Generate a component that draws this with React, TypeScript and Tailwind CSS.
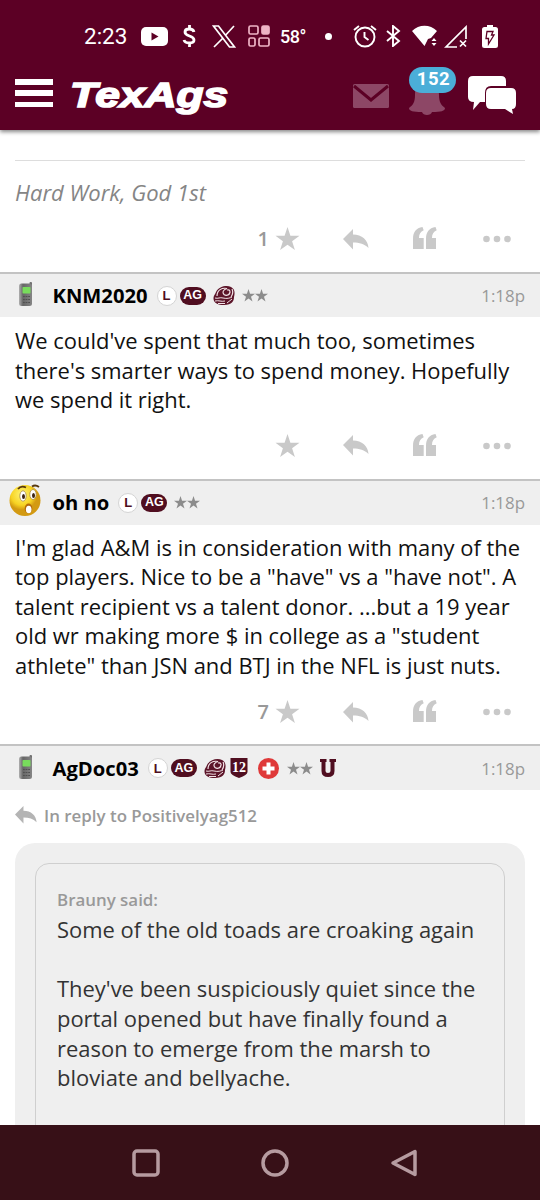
import React from 'react';

const Star = ({ className }: { className: string }) => (
  <svg viewBox="0 0 24 24" className={className} fill="currentColor"><path d="M12 0l2.900 8.800H24l-7.400 5.500L19.400 23 12 17.700 4.600 23l2.800-8.700L0 8.800h9.100z" /></svg>
);
const Reply = ({ className }: { className: string }) => (
  <svg viewBox="0 0 26 21" className={className} fill="currentColor"><path d="M10 0v5.500C19 5.500 25 11 25.500 19c-4-4-9-5.500-15.500-5.500v7L0 10z" /></svg>
);
const Quote = ({ className }: { className: string }) => (
  <svg viewBox="0 0 24 22" className={className} fill="currentColor"><path d="M0 22V12C0 5 3 1 9.500 0l1.200 3.200C7.500 4.500 6 7 6 11h4.700v11zM13 22V12c0-7 3-11 9.500-12l1.200 3.200C20.500 4.500 19 7 19 11h4v11z" /></svg>
);

function Actions({ count, className }: { count?: string; className: string }) {
  return (
    <div className={`flex h-6 items-center text-[#c9c9c9] ${className}`}>
      <span className="w-[275px] shrink-0 pr-[6px] text-right text-[20px] font-semibold leading-6 text-[#999]">{count}</span>
      <Star className="h-[24px] w-[25px] shrink-0" />
      <Reply className="ml-[43px] h-[21px] w-[26px] shrink-0" />
      <Quote className="ml-[44px] h-[22px] w-[24px] shrink-0 -translate-y-px" />
      <svg viewBox="0 0 28 8" className="ml-[46px] h-2 w-7 shrink-0" fill="currentColor"><circle cx="3.500" cy="4" r="3.300" /><circle cx="14" cy="4" r="3.300" /><circle cx="24.500" cy="4" r="3.300" /></svg>
    </div>
  );
}

const Phone = () => (
  <svg viewBox="0 0 16 25" className="ml-[18px] h-[25px] w-4 shrink-0 -translate-y-px">
    <defs><linearGradient id="phone" x1="0" x2="1"><stop stopColor="#b0b0b0" /><stop offset=".3" stopColor="#666" /><stop offset="1" stopColor="#858585" /></linearGradient></defs>
    <rect x="11.500" y="0" width="2.500" height="7" rx="1" fill="#707070" />
    <rect x="1" y="1.500" width="13" height="22.500" rx="2.500" fill="url(#phone)" />
    <rect x="4.500" y="5" width="8" height="6.500" rx=".8" fill="#78dc5c" />
    <path d="M5 14.500h7M5 17.500h7M5 20.500h7" stroke="#505050" strokeWidth="1.200" strokeDasharray="1.800 .8" />
  </svg>
);
const Worried = () => (
  <svg viewBox="0 0 34 34" className="ml-[8px] h-[34px] w-[34px] shrink-0 -translate-y-[3px]">
    <defs><radialGradient id="face" cx=".4" cy=".3"><stop stopColor="#fff575" /><stop offset=".7" stopColor="#f7d323" /><stop offset="1" stopColor="#d39a12" /></radialGradient></defs>
    <circle cx="17" cy="17.500" r="15.500" fill="url(#face)" />
    <g fill="#fff" stroke="#a98b45" strokeWidth=".8"><ellipse cx="15" cy="13" rx="3.200" ry="5.200" /><ellipse cx="25" cy="11.500" rx="3.200" ry="5" /></g>
    <ellipse cx="15.500" cy="13.500" rx="1.500" ry="2.500" fill="#3d2412" /><ellipse cx="25.500" cy="12.500" rx="1.500" ry="2.500" fill="#3d2412" />
    <path d="M10 6c2-2.500 5-3 8-1.500M24 3.500c3-2 5-1 7 .5" fill="none" stroke="#56370d" strokeWidth="1.800" />
    <ellipse cx="20.500" cy="25.500" rx="3.800" ry="5" fill="#b56b0b" /><ellipse cx="20.700" cy="26.500" rx="2.800" ry="3.800" fill="#fff" />
  </svg>
);
const L = () => <span className="flex h-5 w-5 shrink-0 items-center justify-center rounded-full border border-[#d4d4d4] bg-white text-[13px] font-bold text-[#500e20] [font-family:'Liberation_Sans',sans-serif]">L</span>;
const Ag = () => <span className="ml-[3px] flex h-[18px] w-[26px] shrink-0 items-center justify-center rounded-full bg-[#500e20] text-[12.500px] font-bold text-white [font-family:'Liberation_Sans',sans-serif]">AG</span>;
const Ring = () => (
  <svg viewBox="0 0 22 19" className="ml-[7px] h-[19px] w-[22px] shrink-0">
    <path d="M.5 13C.5 9 2 9 3 6 6 0 14-1 18 1c4 2 4 6 3 10 0 4-2 8-10 8C5 19 1 17 .5 13z" fill="#5c1529" />
    <path d="M4 10C4 4 9 1.500 14 2.500c-4 1-5 4-3 6 2 1.500 4 1 6-1M14 4c3-1 4 2 2 4M19 3c1 2 1 5-1 8" fill="none" stroke="#f3e3e7" strokeWidth="1.200" />
    <path d="M2 12c3 1 5-1 8 0 4 1 7 0 9-1M2 15c4-1 6 1 10 0M5 17.500h7M14 17l5-4" fill="none" stroke="#f3e3e7" strokeWidth="1" />
  </svg>
);
const Stars = ({ className }: { className: string }) => <span className={`flex shrink-0 text-[#8c8c8c] ${className}`}><Star className="h-[13px] w-[13px]" /><Star className="h-[13px] w-[13px]" /></span>;

function PostBar({ children, className }: { children: React.ReactNode; className: string }) {
  return <div className={`flex items-center border-t-2 border-[#c3c3c3] bg-[#efefef] ${className}`}>{children}<span className="ml-auto pr-[15px] text-[16.900px] text-[#999]">1:18p</span></div>;
}
function Name({ children }: { children: string }) {
  return <span className="mr-[9px] shrink-0 whitespace-nowrap text-[20.200px] font-bold text-black">{children}</span>;
}
function Lines({ lines, className }: { lines: string[]; className: string }) {
  return <div className={`whitespace-nowrap text-[21.940px] leading-[29.550px] ${className}`}>{lines.map((l, i) => <p key={i} className="h-[29.550px] w-fit">{l}</p>)}</div>;
}

function StatusBar() {
  return (
    <div className="flex h-[72px] shrink-0 items-center pl-[84px] text-white [font-family:Roboto,sans-serif]">
      <span className="w-[57px] pt-[2px] text-[22.500px]">2:23</span>
      <svg viewBox="0 0 27 19" className="h-[19px] w-[27px] shrink-0"><rect width="27" height="19" rx="5" fill="white" /><path d="M10.500 5.500v8l7-4z" fill="#5c0025" /></svg>
      <svg viewBox="0 0 16 22" className="ml-[13px] h-[22px] w-4 shrink-0" fill="none" stroke="white" strokeWidth="2.800"><path d="M13 7C12 3 4 3 4 7c0 5 9 3 9 8 0 4-9 4-10 0M8.500 0v4M8.500 18v4" /></svg>
      <svg viewBox="0 0 24 23" className="ml-[15px] h-[23px] w-6 shrink-0" fill="none" stroke="white" strokeWidth="1.700"><path d="M1.500 1h5l16 21h-5zM22 1L13.500 10.300M10.500 13.500L2 22" /></svg>
      <svg viewBox="0 0 22 22" className="ml-[12px] h-[22px] w-[22px] shrink-0" fill="none" stroke="#eeb4c6" strokeWidth="1.700"><rect x="1" y="1" width="9" height="8" rx="1.500" /><rect x="14" y="1" width="7" height="8" rx="1.500" fill="#eeb4c6" /><rect x="1" y="13" width="6" height="8" rx="1.500" /><rect x="11" y="13" width="10" height="8" rx="1.500" /></svg>
      <span className="ml-[10px] w-[45px] text-[18px] font-medium tracking-[-.5px]">58°</span>
      <span className="h-[7px] w-[7px] shrink-0 rounded-full bg-white" />
      <svg viewBox="0 0 24 24" className="ml-[21px] h-[24px] w-[24px] shrink-0" fill="none" stroke="white" strokeWidth="1.900"><circle cx="12" cy="13" r="9.500" /><path d="M11.500 8v5l4 3M1 6l5-4M18 2l5 4" /></svg>
      <svg viewBox="0 0 15 22" className="ml-[9px] h-[22px] w-[15px] shrink-0" fill="none" stroke="white" strokeWidth="1.900"><path d="M1 6l12 10-6 5V1l6 5L1 16" /></svg>
      <svg viewBox="0 0 26 22" className="ml-[11px] h-[22px] w-[26px] shrink-0"><path d="M0 6C7-1 18-1 25 6l-6 7-3 1-3.500 7z" fill="white" /><path d="M19.500 16l2.500-3 2.500 3zM19.500 18l2.500 3 2.500-3z" fill="white" /></svg>
      <svg viewBox="0 0 24 23" className="ml-[6px] h-[23px] w-6 shrink-0" fill="none" stroke="white" strokeWidth="1.700"><path d="M22 14V2L2 22h11M16 15.500l6 6m0-6l-6 6" /></svg>
      <svg viewBox="0 0 16 23" className="ml-[14px] h-[23px] w-4 shrink-0"><path d="M5 0h6v2h2.500Q16 2 16 4.500v16q0 2.500-2.500 2.500h-11Q0 23 0 20.500v-16Q0 2 2.500 2H5z" fill="white" /><path d="M5 6.500h6L9.500 10H12l-5.500 9v-5.500H4z" fill="none" stroke="#5c0025" strokeWidth="1.300" /></svg>
    </div>
  );
}

function Header() {
  return (
    <header className="relative z-10 h-[130px] bg-[#5c0025] shadow-[0_2px_4px_#0007]">
      <StatusBar />
      <div className="flex h-[48px] items-center pl-[15px]">
        <div className="flex h-[28px] w-[38px] shrink-0 -translate-y-[3px] flex-col justify-between"><i className="h-[5.500px] bg-white" /><i className="h-[5.500px] bg-white" /><i className="h-[5.500px] bg-white" /></div>
        <svg viewBox="0 0 165 48" className="ml-[17px] h-[48px] w-[165px] shrink-0"><text transform="translate(0 34.500) scale(1.180 1)" textLength="134" lengthAdjust="spacingAndGlyphs" fill="white" stroke="white" strokeWidth="1.700" className="text-[36px] font-bold italic [font-family:'Liberation_Sans',sans-serif]">TexAgs</text></svg>
        <svg viewBox="0 0 36 24" className="ml-[118px] h-[24px] w-[36px] shrink-0"><rect width="36" height="24" rx="1.500" fill="#8d4766" /><path d="M1 2l17 14L35 2" fill="none" stroke="#5c0025" strokeWidth="3" /></svg>
        <div className="relative ml-[20px] h-[48px] w-[36px] shrink-0">
          <svg viewBox="0 0 36 34" className="mt-[9px] h-[34px] w-[36px]" fill="#8d4766"><path d="M18 0C9 0 6 6 6 14c0 7-2 10-6 13 0 3 4 4 13 4 1 4 9 4 10 0 9 0 13-1 13-4-4-3-6-6-6-13 0-8-3-14-12-14z" /></svg>
          <span className="absolute -top-[5px] left-0 flex h-[26px] w-[47px] items-center justify-center rounded-full bg-[#4baed8] pl-[2px] text-[18.500px] font-bold tracking-[.5px] text-white [font-family:Roboto,sans-serif]">152</span>
        </div>
        <svg viewBox="0 0 48 39" className="ml-[23px] h-[39px] w-12 shrink-0 -translate-y-px" fill="white"><path d="M5 0h28q5 0 5 5v5H23q-6 0-6 7v9h-5l-7 8 1-8q-6 0-6-5V5q0-5 5-5z" /><path d="M23 12h20q5 0 5 5v11q0 5-4 5l1 5-8-5H23q-5 0-5-5V17q0-5 5-5z" /></svg>
      </div>
    </header>
  );
}

export default function App() {
  return (
    <div className="flex h-[1200px] w-[540px] flex-col overflow-hidden bg-white [font-family:'Open_Sans','Noto_Sans',sans-serif]">
      <Header />
      <main className="h-[995px] shrink-0 overflow-hidden">
        <div className="mx-[15px] mt-[30px] h-px bg-[#ddd]" />
        <p className="ml-[15px] mt-[16px] w-fit whitespace-nowrap text-[22px] italic leading-[30px] text-[#858585]">Hard Work, God 1st</p>
        <Actions count="1" className="mt-[20px]" />
        <div className="mt-[21px]"><PostBar className="h-[45px]"><Phone /><span className="w-[18.500px]" /><Name>KNM2020</Name><L /><Ag /><Ring /><Stars className="ml-[7px]" /></PostBar></div>
        <Lines className="ml-[15px] mt-[9px] text-[#111]" lines={["We could've spent that much too, sometimes", "there's smarter ways to spend money. Hopefully", 'we spend it right.']} />
        <Actions className="mt-[19px]" />
        <div className="mt-[21px]"><PostBar className="h-[46px]"><Worried /><span className="w-[10.500px]" /><Name>oh no</Name><L /><Ag /><Stars className="ml-[7px]" /></PostBar></div>
        <Lines className="ml-[15px] mt-[8px] text-[#111]" lines={["I'm glad A&M is in consideration with many of the", 'top players. Nice to be a "have" vs a "have not". A', 'talent recipient vs a talent donor. ...but a 19 year', 'old wr making more $ in college as a "student', 'athlete" than JSN and BTJ in the NFL is just nuts.']} />
        <Actions count="7" className="mt-[20px]" />
        <div className="mt-[20px]"><PostBar className="h-[46px]"><Phone /><span className="w-[18.500px]" /><Name>AgDoc03</Name><L /><Ag /><Ring />
          <svg viewBox="0 0 18 20" className="ml-[4px] h-[20px] w-[18px] shrink-0"><path d="M.5 0h17v14q0 3-8.500 6-8.500-3-8.500-6z" fill="#500e20" /><text x="9" y="14" textAnchor="middle" fill="white" className="text-[14px] font-bold [font-family:'Liberation_Serif',serif]">12</text></svg>
          <svg viewBox="0 0 21 21" className="ml-[10px] h-[21px] w-[21px] shrink-0"><circle cx="10.500" cy="10.500" r="10.500" fill="#df3939" /><path d="M10.500 4.500v12M4.500 10.500h12" stroke="white" strokeWidth="4" /></svg>
          <Stars className="ml-[8px]" />
          <svg viewBox="0 0 16 18" className="ml-[7px] h-[18px] w-4 shrink-0" fill="none" stroke="#500e20"><path d="M3.500 2v10q0 4 4.500 4t4.500-4V2" strokeWidth="4" /><path d="M0 1.500h6.500M9.500 1.500H16" strokeWidth="3" /></svg>
        </PostBar></div>
        <div className="mt-[11px] flex h-[28px] items-center text-[#b4b4b4]"><Reply className="ml-[15px] h-[18px] w-[22px] shrink-0" /><span className="ml-[7px] whitespace-nowrap text-[16.900px] font-semibold text-[#999]">In reply to Positivelyag512</span></div>
        <div className="mx-[15px] mt-[14px] h-[400px] rounded-[20px] bg-[#efefef] p-5">
          <div className="h-[380px] rounded-[14px] border-[1.500px] border-[#cfcfcf] pl-[21px] pt-[22px]">
            <p className="w-fit text-[16.900px] font-semibold leading-[28px] text-[#999]">Brauny said:</p>
            <Lines className="mt-px text-[#333]" lines={['Some of the old toads are croaking again', '', "They've been suspiciously quiet since the", 'portal opened but have finally found a', 'reason to emerge from the marsh to', 'bloviate and bellyache.']} />
          </div>
        </div>
      </main>
      <nav className="flex h-[75px] shrink-0 items-center bg-[#371017] pl-[132px]">
        <svg viewBox="0 0 28 28" className="h-7 w-7" fill="none" stroke="#b69ba0" strokeWidth="3.500"><rect x="2" y="2" width="24" height="24" rx="3" /></svg>
        <svg viewBox="0 0 28 28" className="ml-[101px] h-7 w-7" fill="none" stroke="#b69ba0" strokeWidth="3.500"><circle cx="14" cy="14" r="12" /></svg>
        <svg viewBox="0 0 28 28" className="ml-[101px] h-7 w-7" fill="none" stroke="#b69ba0" strokeWidth="3.500" strokeLinejoin="round"><path d="M25 2.500v23L3 14z" /></svg>
      </nav>
    </div>
  );
}
